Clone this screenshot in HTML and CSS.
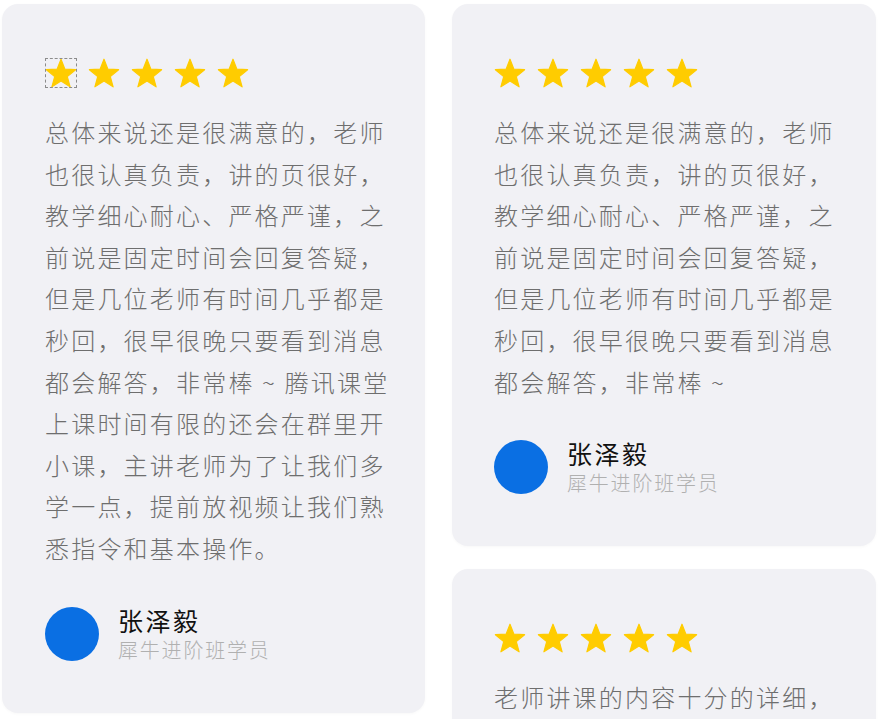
FILE: index.html
```html
<!DOCTYPE html>
<html lang="zh-CN">
<head>
<meta charset="utf-8">
<title>学员评价</title>
<link rel="stylesheet" href="styles.css">
</head>
<body>
<svg width="0" height="0" class="defs" aria-hidden="true">
  <defs>
    <symbol id="star" viewBox="0 0 32 30">
      <polygon points="16,1.2 19.9,11.2 30.6,11.7 22.3,18.6 25.1,28.8 16,23.1 6.9,28.8 9.7,18.6 1.4,11.7 12.1,11.2" fill="#ffcc00" stroke="#ffcc00" stroke-width="1.2" stroke-linejoin="round"/>
    </symbol>
  </defs>
</svg>
<main class="wall">
  <div class="col">
    <article class="card">
      <div class="stars">
        <svg class="star star-focus"><use href="#star"/></svg>
        <svg class="star"><use href="#star"/></svg>
        <svg class="star"><use href="#star"/></svg>
        <svg class="star"><use href="#star"/></svg>
        <svg class="star"><use href="#star"/></svg>
      </div>
      <p class="text">总体来说还是很满意的，老师也很认真负责，讲的页很好，教学细心耐心、严格严谨，之前说是固定时间会回复答疑，但是几位老师有时间几乎都是秒回，很早很晚只要看到消息都会解答，非常棒 ~ 腾讯课堂上课时间有限的还会在群里开小课，主讲老师为了让我们多学一点，提前放视频让我们熟悉指令和基本操作。</p>
      <div class="user">
        <div class="avatar"></div>
        <div class="info">
          <div class="name">张泽毅</div>
          <div class="role">犀牛进阶班学员</div>
        </div>
      </div>
    </article>
  </div>
  <div class="col">
    <article class="card">
      <div class="stars">
        <svg class="star"><use href="#star"/></svg>
        <svg class="star"><use href="#star"/></svg>
        <svg class="star"><use href="#star"/></svg>
        <svg class="star"><use href="#star"/></svg>
        <svg class="star"><use href="#star"/></svg>
      </div>
      <p class="text">总体来说还是很满意的，老师也很认真负责，讲的页很好，教学细心耐心、严格严谨，之前说是固定时间会回复答疑，但是几位老师有时间几乎都是秒回，很早很晚只要看到消息都会解答，非常棒 ~</p>
      <div class="user">
        <div class="avatar"></div>
        <div class="info">
          <div class="name">张泽毅</div>
          <div class="role">犀牛进阶班学员</div>
        </div>
      </div>
    </article>
    <article class="card card-tail">
      <div class="stars">
        <svg class="star"><use href="#star"/></svg>
        <svg class="star"><use href="#star"/></svg>
        <svg class="star"><use href="#star"/></svg>
        <svg class="star"><use href="#star"/></svg>
        <svg class="star"><use href="#star"/></svg>
      </div>
      <p class="text">老师讲课的内容十分的详细，</p>
    </article>
  </div>
</main>
</body>
</html>
```
FILE: styles.css
```css
html, body {
  margin: 0;
  padding: 0;
  background: #ffffff;
}
body {
  font-family: "Noto Sans CJK SC", "Noto Sans", sans-serif;
  overflow: hidden;
  height: 719px;
}
.defs {
  position: absolute;
  width: 0;
  height: 0;
}
.wall {
  display: grid;
  grid-template-columns: 423px 424px;
  column-gap: 27px;
  align-items: start;
  padding: 4px 0 0 2px;
}
.col {
  display: flex;
  flex-direction: column;
  gap: 23px;
}
.card {
  background: #f1f1f5;
  border-radius: 16px;
  padding: 54px 28px 49px 43px;
  box-shadow: 0 1px 3px rgba(0, 0, 0, 0.03);
}
.col + .col .card {
  padding-left: 42px;
  padding-right: 30px;
}
.card-tail {
  padding-bottom: 120px;
}
.stars {
  display: flex;
  gap: 11px;
  height: 30px;
}
.star {
  width: 32px;
  height: 30px;
  display: block;
}
.star-focus {
  outline: 1px dashed #8c8c8c;
  outline-offset: -1px;
}
.text {
  margin: 23px 0 0;
  font-size: 24px;
  font-weight: 300;
  line-height: 41.6px;
  letter-spacing: 2.2px;
  color: #6e6e6e;
  width: 354px;
}
.user {
  display: flex;
  align-items: center;
  gap: 19px;
  margin-top: 35px;
  height: 60px;
}
.avatar {
  width: 54px;
  height: 54px;
  border-radius: 50%;
  background: #0a6fe3;
  flex: none;
}
.info {
  display: flex;
  flex-direction: column;
}
.name {
  font-size: 25px;
  line-height: 32px;
  letter-spacing: 2.5px;
  color: #111111;
}
.role {
  font-size: 20px;
  font-weight: 300;
  line-height: 28px;
  letter-spacing: 1.8px;
  color: #b0b0b0;
}
```
